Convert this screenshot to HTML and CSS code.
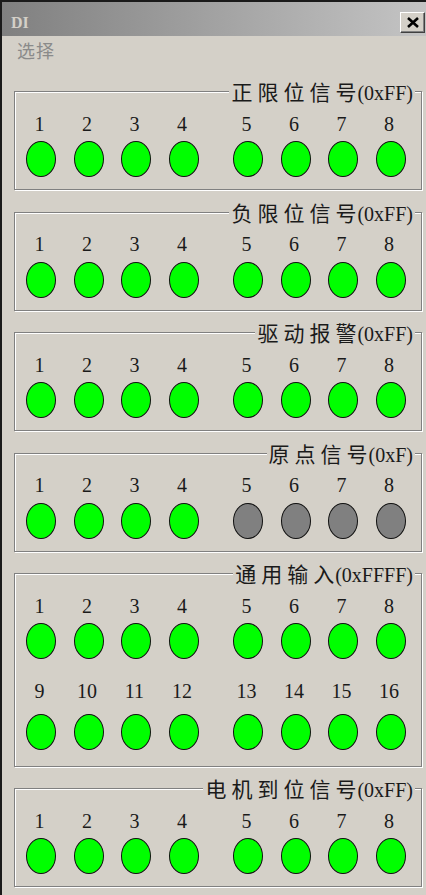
FILE: index.html
```html
<!DOCTYPE html>
<html lang="zh-CN">
<head>
    <meta charset="UTF-8">
    <meta name="viewport" content="width=device-width, initial-scale=1.0">
    <title>DI</title>
    <link rel="stylesheet" href="styles.css">
</head>
<body>

<div class="window">
    <!-- Caption bar (inactive) -->
    <div class="titlebar">
        <span class="caption">DI</span>
        <button class="close-btn" type="button" aria-label="关闭">
            <svg width="14" height="11" viewBox="0 0 14 11">
                <path d="M2 1 L12 10 M12 1 L2 10" stroke="#000" stroke-width="2.6" fill="none"/>
            </svg>
        </button>
    </div>

    <div class="menubar">
        <span class="menu-item">选择</span>
    </div>

    <div class="content">

        <section class="group">
            <h2 class="group-title"><span class="cn">正限位信号</span><span class="hex">(0xFF)</span></h2>
            <div class="led-row">
                <div class="bank">
                    <div class="cell"><span class="num">1</span><span class="led on"></span></div>
                    <div class="cell"><span class="num">2</span><span class="led on"></span></div>
                    <div class="cell"><span class="num">3</span><span class="led on"></span></div>
                    <div class="cell"><span class="num">4</span><span class="led on"></span></div>
                </div>
                <div class="bank">
                    <div class="cell"><span class="num">5</span><span class="led on"></span></div>
                    <div class="cell"><span class="num">6</span><span class="led on"></span></div>
                    <div class="cell"><span class="num">7</span><span class="led on"></span></div>
                    <div class="cell"><span class="num">8</span><span class="led on"></span></div>
                </div>
            </div>
        </section>

        <section class="group">
            <h2 class="group-title"><span class="cn">负限位信号</span><span class="hex">(0xFF)</span></h2>
            <div class="led-row">
                <div class="bank">
                    <div class="cell"><span class="num">1</span><span class="led on"></span></div>
                    <div class="cell"><span class="num">2</span><span class="led on"></span></div>
                    <div class="cell"><span class="num">3</span><span class="led on"></span></div>
                    <div class="cell"><span class="num">4</span><span class="led on"></span></div>
                </div>
                <div class="bank">
                    <div class="cell"><span class="num">5</span><span class="led on"></span></div>
                    <div class="cell"><span class="num">6</span><span class="led on"></span></div>
                    <div class="cell"><span class="num">7</span><span class="led on"></span></div>
                    <div class="cell"><span class="num">8</span><span class="led on"></span></div>
                </div>
            </div>
        </section>

        <section class="group">
            <h2 class="group-title"><span class="cn">驱动报警</span><span class="hex">(0xFF)</span></h2>
            <div class="led-row">
                <div class="bank">
                    <div class="cell"><span class="num">1</span><span class="led on"></span></div>
                    <div class="cell"><span class="num">2</span><span class="led on"></span></div>
                    <div class="cell"><span class="num">3</span><span class="led on"></span></div>
                    <div class="cell"><span class="num">4</span><span class="led on"></span></div>
                </div>
                <div class="bank">
                    <div class="cell"><span class="num">5</span><span class="led on"></span></div>
                    <div class="cell"><span class="num">6</span><span class="led on"></span></div>
                    <div class="cell"><span class="num">7</span><span class="led on"></span></div>
                    <div class="cell"><span class="num">8</span><span class="led on"></span></div>
                </div>
            </div>
        </section>

        <section class="group">
            <h2 class="group-title"><span class="cn">原点信号</span><span class="hex">(0xF)</span></h2>
            <div class="led-row">
                <div class="bank">
                    <div class="cell"><span class="num">1</span><span class="led on"></span></div>
                    <div class="cell"><span class="num">2</span><span class="led on"></span></div>
                    <div class="cell"><span class="num">3</span><span class="led on"></span></div>
                    <div class="cell"><span class="num">4</span><span class="led on"></span></div>
                </div>
                <div class="bank">
                    <div class="cell"><span class="num">5</span><span class="led off"></span></div>
                    <div class="cell"><span class="num">6</span><span class="led off"></span></div>
                    <div class="cell"><span class="num">7</span><span class="led off"></span></div>
                    <div class="cell"><span class="num">8</span><span class="led off"></span></div>
                </div>
            </div>
        </section>

        <section class="group group-tall">
            <h2 class="group-title"><span class="cn">通用输入</span><span class="hex">(0xFFFF)</span></h2>
            <div class="led-row">
                <div class="bank">
                    <div class="cell"><span class="num">1</span><span class="led on"></span></div>
                    <div class="cell"><span class="num">2</span><span class="led on"></span></div>
                    <div class="cell"><span class="num">3</span><span class="led on"></span></div>
                    <div class="cell"><span class="num">4</span><span class="led on"></span></div>
                </div>
                <div class="bank">
                    <div class="cell"><span class="num">5</span><span class="led on"></span></div>
                    <div class="cell"><span class="num">6</span><span class="led on"></span></div>
                    <div class="cell"><span class="num">7</span><span class="led on"></span></div>
                    <div class="cell"><span class="num">8</span><span class="led on"></span></div>
                </div>
            </div>
            <div class="led-row second">
                <div class="bank">
                    <div class="cell"><span class="num">9</span><span class="led on"></span></div>
                    <div class="cell"><span class="num">10</span><span class="led on"></span></div>
                    <div class="cell"><span class="num">11</span><span class="led on"></span></div>
                    <div class="cell"><span class="num">12</span><span class="led on"></span></div>
                </div>
                <div class="bank">
                    <div class="cell"><span class="num">13</span><span class="led on"></span></div>
                    <div class="cell"><span class="num">14</span><span class="led on"></span></div>
                    <div class="cell"><span class="num">15</span><span class="led on"></span></div>
                    <div class="cell"><span class="num">16</span><span class="led on"></span></div>
                </div>
            </div>
        </section>

        <section class="group">
            <h2 class="group-title"><span class="cn">电机到位信号</span><span class="hex">(0xFF)</span></h2>
            <div class="led-row">
                <div class="bank">
                    <div class="cell"><span class="num">1</span><span class="led on"></span></div>
                    <div class="cell"><span class="num">2</span><span class="led on"></span></div>
                    <div class="cell"><span class="num">3</span><span class="led on"></span></div>
                    <div class="cell"><span class="num">4</span><span class="led on"></span></div>
                </div>
                <div class="bank">
                    <div class="cell"><span class="num">5</span><span class="led on"></span></div>
                    <div class="cell"><span class="num">6</span><span class="led on"></span></div>
                    <div class="cell"><span class="num">7</span><span class="led on"></span></div>
                    <div class="cell"><span class="num">8</span><span class="led on"></span></div>
                </div>
            </div>
        </section>

    </div>
</div>

</body>
</html>
```

FILE: styles.css
```css
body {
    margin: 0;
    background: #d4d0c8;
    font-family: "Liberation Serif", "Noto Sans CJK SC", serif;
    color: #000;
}

.window {
    height: 895px;
    border-left: 2px solid #1a1a1a;
    border-top: 2px solid #1a1a1a;
    box-sizing: border-box;
    background: #d4d0c8;
    overflow: hidden;
}

/* inactive caption */
.titlebar {
    height: 34px;
    box-sizing: border-box;
    padding: 7px 1px 0 9px;
    display: flex;
    align-items: center;
    justify-content: space-between;
    background: linear-gradient(to right, #808080, #c4c4c4);
}
.caption {
    font: bold 16px/16px "Liberation Serif", serif;
    color: #d4d0c8;
}
.close-btn {
    width: 25px;
    height: 21px;
    padding: 0;
    margin: 0;
    display: flex;
    align-items: center;
    justify-content: center;
    background: #d4d0c8;
    border: 1px solid;
    border-color: #fff #404040 #404040 #fff;
    box-shadow: inset -1px -1px 0 #808080;
}

.menubar {
    height: 28px;
    padding-left: 15px;
    display: flex;
    align-items: center;
}
.menu-item {
    font: 18px/28px "Noto Sans CJK SC", sans-serif;
    letter-spacing: 1px;
    color: #8a8a8a;
}

.content {
    padding: 27px 4px 0 12px;
}

/* etched group box */
.group {
    position: relative;
    border: 1px solid #808080;
    box-shadow: inset 1px 1px 0 #fff, 1px 1px 0 #fff;
    padding: 21.5px 0 12px 11px;
    margin-bottom: 21.5px;
}
.group-tall {
    padding-bottom: 16px;
}
.group-title {
    position: absolute;
    top: -13px;
    right: 6px;
    margin: 0;
    padding: 0 2px;
    background: #d4d0c8;
    font-weight: normal;
    line-height: 24px;
    white-space: nowrap;
}
.group-title .cn {
    font: 21px/24px "Noto Sans CJK SC", sans-serif;
    letter-spacing: 5px;
    margin-right: -4px;
    color: #1a1a1a;
}
.group-title .hex {
    font: 20px/24px "Liberation Serif", serif;
    color: #1a1a1a;
}

.led-row {
    display: flex;
    gap: 34.5px;
}
.led-row.second {
    margin-top: 22px;
}
.bank {
    display: flex;
    gap: 17.5px;
}
.cell {
    width: 30px;
    display: flex;
    flex-direction: column;
    align-items: center;
}
.num {
    font: 20px/20px "Liberation Serif", serif;
    color: #1a1a1a;
    margin-bottom: 7.5px;
    padding-right: 3px;
}
.second .num {
    margin-bottom: 12.5px;
}
.led {
    width: 30px;
    height: 36px;
    box-sizing: border-box;
    border: 1.5px solid #111;
    border-radius: 50%;
}
.led.on {
    background: #00ff00;
}
.led.off {
    background: #808080;
}
```
